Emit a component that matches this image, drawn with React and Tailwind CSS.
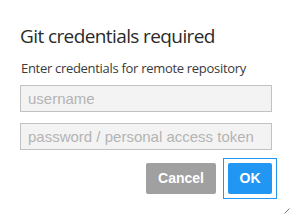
import React from 'react';

const App = () => {
    return (
        <div className="w-[293px] h-[216px] bg-white relative" style={{ fontFamily: '"Open Sans", "Noto Sans", sans-serif' }}>
            <div className="pl-[21px] pr-[21px] pt-[24px]">
                <h1 className="-ml-[1px] text-[19px] leading-[24px] tracking-[-0.6px] text-[#2a2a2a]">Git credentials required</h1>
                <p className="mt-[12px] text-[13px] leading-[16px] tracking-[-0.3px] text-[#3a3a3a]">Enter credentials for remote repository</p>
                <div className="mt-[9px] flex flex-col gap-[11px]">
                    <input
                        placeholder="username"
                        className="-ml-[1px] w-[252px] h-[27px] bg-[#f3f3f3] border border-[#c2c2c2] px-[7px] text-[15px] text-[#333] placeholder:text-[#b3b3b3] outline-none"
                        style={{ fontFamily: '"Liberation Sans", Arial, sans-serif' }}
                    />
                    <input
                        placeholder="password / personal access token"
                        type="password"
                        className="-ml-[1px] w-[252px] h-[27px] bg-[#f3f3f3] border border-[#c2c2c2] px-[7px] text-[15px] text-[#333] placeholder:text-[#b3b3b3] outline-none"
                        style={{ fontFamily: '"Liberation Sans", Arial, sans-serif' }}
                    />
                </div>
                <div className="mt-[13px] flex justify-end gap-[12px]" style={{ fontFamily: '"Liberation Sans", Arial, sans-serif' }}>
                    <button className="w-[70px] h-[31px] rounded-[2px] bg-[#a0a0a0] text-white font-bold text-[14px]">Cancel</button>
                    <button className="relative w-[44px] h-[31px] rounded-[2px] bg-[#2196f3] text-white font-bold text-[14px] outline-none">
                        OK
                        <span className="absolute -inset-[5px] border border-[#2196f3] pointer-events-none"></span>
                    </button>
                </div>
            </div>
            <svg className="absolute right-[3px] bottom-[2px]" width="6" height="6" viewBox="0 0 6 6">
                <line x1="0.5" y1="5.5" x2="5.5" y2="0.5" stroke="#777" strokeWidth="1" />
            </svg>
        </div>
    );
};

export default App;
